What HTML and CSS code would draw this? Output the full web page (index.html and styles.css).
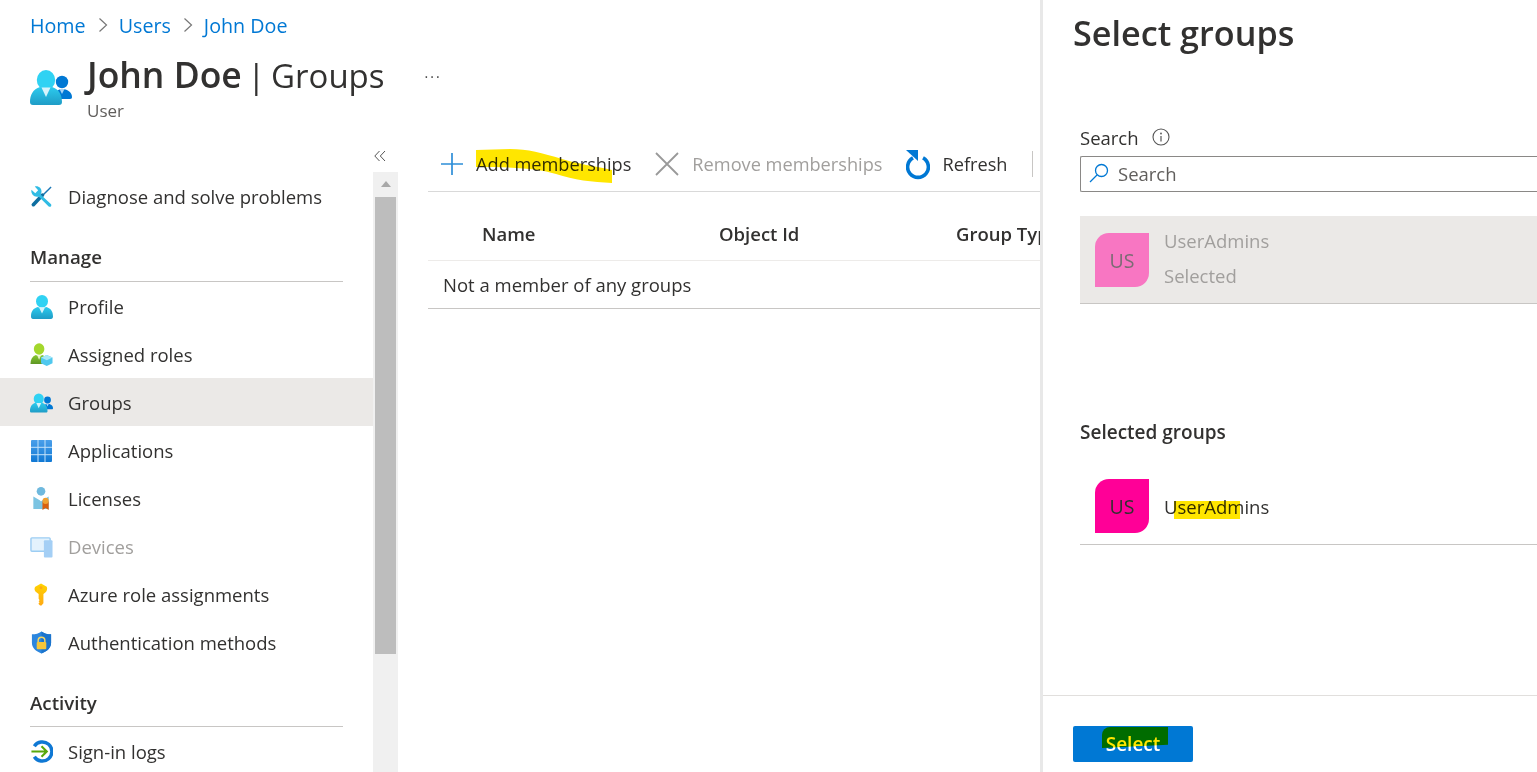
FILE: index.html
```html
<!DOCTYPE html>
<html lang="en">
<head>
<meta charset="utf-8">
<title>John Doe | Groups</title>
<link rel="stylesheet" href="styles.css">
</head>
<body>
<svg class="defs" aria-hidden="true">
  <defs>
    <linearGradient id="gBlue" x1="0" y1="0" x2="0" y2="1"><stop offset="0" stop-color="#2ccbee"/><stop offset="1" stop-color="#1f9cc6"/></linearGradient>
    <linearGradient id="gGreen" x1="0" y1="0" x2="0" y2="1"><stop offset="0" stop-color="#86c832"/><stop offset="1" stop-color="#5e9624"/></linearGradient>
    <linearGradient id="gKey" x1="0" y1="0" x2="0" y2="1"><stop offset="0" stop-color="#ffd400"/><stop offset="1" stop-color="#ffa914"/></linearGradient>
    <linearGradient id="gApps" x1="0" y1="0" x2="0" y2="1"><stop offset="0" stop-color="#4a9fea"/><stop offset="1" stop-color="#0f78d4"/></linearGradient>
    <symbol id="groups" viewBox="0 0 42 35">
      <circle cx="32" cy="12" r="6.200" fill="#0078d4"/>
      <path d="M25 29c0-6 2-10 7-10s10 3 10 8c0 1-.5 2-2 2z" fill="#0078d4"/>
      <path d="M29.500 19l2.500 5 2.500-5z" fill="#a9d4f5"/>
      <ellipse cx="16" cy="10" rx="9.200" ry="10" fill="#30d2f3"/>
      <path d="M0 32c0-7 3-13 10-15l6 2 6-2c7 2 10 8 10 15 0 2-1 3-3 3H3c-2 0-3-1-3-3z" fill="url(#gBlue)"/>
      <path d="M11.500 17.500h9L16 27z" fill="#d7f3fb"/>
    </symbol>
    <symbol id="person" viewBox="0 0 22 24">
      <ellipse cx="11" cy="6.300" rx="6" ry="6.300" fill="#30d2f3"/>
      <path d="M0 21.500c0-5 2-8 6.500-9.500l4.500 1.500 4.500-1.500c4.500 1.500 6.500 4.500 6.500 9.500 0 1.500-.7 2.500-2 2.500H2c-1.300 0-2-1-2-2.500z" fill="url(#gBlue)"/>
      <path d="M8 12.500h6l-3 6z" fill="#d7f3fb"/>
    </symbol>
  </defs>
</svg>

<div class="app">
  <div class="workspace">
    <header class="page-head">
      <nav class="crumbs">
        <a class="crumb">Home</a>
        <svg class="chev" viewBox="0 0 10 16"><path d="M1.500 1.500 8.500 8l-7 6.500" fill="none" stroke="#777" stroke-width="1.200"/></svg>
        <a class="crumb">Users</a>
        <svg class="chev" viewBox="0 0 10 16"><path d="M1.500 1.500 8.500 8l-7 6.500" fill="none" stroke="#777" stroke-width="1.200"/></svg>
        <a class="crumb">John Doe</a>
      </nav>
      <div class="title-row">
        <svg class="title-icon"><use href="#groups"/></svg>
        <div class="title-text">
          <h1 class="title"><span class="title-strong">John Doe</span> | Groups</h1>
          <div class="subtitle">User</div>
        </div>
        <span class="more">···</span>
      </div>
    </header>

    <div class="content">
      <aside class="side">
        <div class="collapse">
          <svg class="collapse-icon" viewBox="0 0 12 12"><path d="M5.500 1 .8 6l4.700 5M11 1 6.300 6 11 11" fill="none" stroke="#555" stroke-width="1"/></svg>
        </div>
        <div class="side-body">
          <nav class="menu">
            <a class="item">
              <svg class="ico" viewBox="0 0 24 24"><path d="M22 2 12 12" stroke="#1a76b5" stroke-width="1.500" fill="none"/><path d="M13 10.500 3.500 20.500" stroke="#0f6ea0" stroke-width="3.800" stroke-linecap="round" fill="none"/><path d="M1.500 5 5.500 8.500 8.500 5.500 5 1.500C8.500.5 12.500 3 12 7.500L11 10 22 20c1 2-1 3.500-2.500 2.500L9 12C5 13.500.5 9.500 1.500 5z" fill="#30bce4"/></svg>
              <span>Diagnose and solve problems</span>
            </a>
            <h2 class="section">Manage</h2>
            <a class="item"><svg class="ico ico-person"><use href="#person"/></svg><span>Profile</span></a>
            <a class="item">
              <svg class="ico" viewBox="0 0 24 24"><ellipse cx="9.500" cy="6.300" rx="5.500" ry="6" fill="#a3d72c"/><path d="M.5 22c0-5 2-8 5.500-9.500l3.500 1.500 3.500-1.500c3.500 1.500 5.500 4.500 5.500 9.500z" fill="url(#gGreen)"/><path d="M7.500 13h4l-2 4.500z" fill="#e6f5c8"/><path d="M17.500 12.500l6 2.700v5.800l-6 3-6-3v-5.800z" fill="#50c8ee"/><path d="M17.500 18l6-2.800-6-2.700-6 2.700z" fill="#a8e8f8"/></svg>
              <span>Assigned roles</span>
            </a>
            <a class="item item-active"><svg class="ico ico-groups"><use href="#groups"/></svg><span>Groups</span></a>
            <a class="item">
              <svg class="ico ico-apps" viewBox="0 0 21 22"><rect width="21" height="22" rx="1" fill="url(#gApps)"/><path d="M7 0v22M14 0v22M0 7.300h21M0 14.700h21" stroke="#c4e2f9" stroke-width="1"/></svg>
              <span>Applications</span>
            </a>
            <a class="item">
              <svg class="ico" viewBox="0 0 24 24"><circle cx="11.500" cy="4.500" r="4.500" fill="#6fb9de"/><path d="M3.500 10 11.500 14.500 19.500 10v13h-16z" fill="#7cc4e2"/><path d="M8.500 10.500h6l-3 4.500z" fill="#fff"/><path d="M13 15h6.500v9l-3.200-2-3.300 2z" fill="#d95f0e"/><circle cx="16.300" cy="14.500" r="3.200" fill="#f0a030"/></svg>
              <span>Licenses</span>
            </a>
            <a class="item item-muted">
              <svg class="ico" viewBox="0 0 24 24"><rect x="1" y="3" width="20" height="14" rx="1" fill="#e3f2fd" stroke="#9ccdf3" stroke-width="1.500"/><rect x="14.500" y="5.500" width="9" height="18" rx="1" fill="#a4cff5"/></svg>
              <span>Devices</span>
            </a>
            <a class="item">
              <svg class="ico" viewBox="0 0 24 24"><path d="M11.500.5 17.500 4c1 2 0 5-1.500 6l-2 1.500V21l-2 2.500h-1.500L9 22v-1l1-1-1-1 1-1-1-1.500v-5L7 10C5 9 4 6 5.500 4z" fill="url(#gKey)"/><circle cx="11.500" cy="5" r="1.500" fill="#ffa914"/></svg>
              <span>Azure role assignments</span>
            </a>
            <a class="item">
              <svg class="ico" viewBox="0 0 24 24"><path d="M12 .5c3 2 6 3 10 3v9c0 5-4 8.500-10 11-6-2.500-10-6-10-11v-9c4 0 7-1 10-3z" fill="#2c86de"/><path d="M12 .5c3 2 6 3 10 3v9c0 5-4 8.500-10 11z" fill="#1b74cc"/><path d="M8.500 12V10c0-2.200 1.500-3.500 3.500-3.500s3.500 1.300 3.500 3.500v2" fill="none" stroke="#f5d765" stroke-width="1.500"/><rect x="7" y="11.500" width="10" height="7.500" rx="1" fill="#f5c63a"/></svg>
              <span>Authentication methods</span>
            </a>
            <h2 class="section section-tight">Activity</h2>
            <a class="item">
              <svg class="ico" viewBox="0 0 24 24"><path d="M4.500 6.500A10 10 0 1 1 4.500 17.500" fill="none" stroke="#0f78d4" stroke-width="3.600"/><path d="M1.500 12H17M12 6.500l5.500 5.500-5.500 5.500" fill="none" stroke="#58a80c" stroke-width="2.200"/></svg>
              <span>Sign-in logs</span>
            </a>
          </nav>
          <div class="scrollbar">
            <div class="scroll-up"></div>
            <div class="scroll-thumb"></div>
          </div>
        </div>
      </aside>

      <main class="main">
        <div class="toolbar">
          <button class="tool tool-add">
            <svg class="tool-ico tool-ico-plus" viewBox="0 0 22 22"><path d="M11 0v22M0 11h22" stroke="#2e8ed8" stroke-width="1.700" fill="none"/></svg>
            <span>Add memberships</span>
          </button>
          <button class="tool tool-remove tool-muted">
            <svg class="tool-ico" viewBox="0 0 24 24"><path d="M1 1l22 22M23 1 1 23" stroke="#999" stroke-width="1.800" fill="none"/></svg>
            <span>Remove memberships</span>
          </button>
          <button class="tool tool-refresh">
            <svg class="tool-ico tool-ico-refresh" viewBox="0 0 24 30"><path d="M7 7.900A10.400 10.400 0 1 0 17 7.900" fill="none" stroke="#0078d4" stroke-width="3.600"/><path d="M0 0h12v11z" fill="#0078d4"/></svg>
            <span>Refresh</span>
          </button>
          <span class="tool-sep"></span>
        </div>
        <div class="table">
          <div class="thead">
            <span class="th">Name</span>
            <span class="th">Object Id</span>
            <span class="th">Group Type</span>
          </div>
          <div class="empty">Not a member of any groups</div>
        </div>
      </main>
    </div>
  </div>

  <section class="panel">
    <h2 class="panel-title">Select groups</h2>
    <div class="panel-body">
      <div class="label-row">
        <span>Search</span>
        <svg class="info" viewBox="0 0 18 18"><circle cx="9" cy="9" r="8" fill="none" stroke="#555" stroke-width="1.100"/><circle cx="9" cy="5.500" r=".9" fill="#555"/><path d="M9 8v5.500" stroke="#555" stroke-width="1.200"/></svg>
      </div>
      <div class="search">
        <svg class="search-ico" viewBox="0 0 20 20"><circle cx="12.500" cy="7.500" r="6" fill="none" stroke="#0078d4" stroke-width="1.300"/><path d="M8 12 1 19" stroke="#0078d4" stroke-width="1.300"/></svg>
        <span>Search</span>
      </div>
      <div class="result">
        <div class="avatar avatar-dim">US</div>
        <div class="result-text">
          <div>UserAdmins</div>
          <div>Selected</div>
        </div>
      </div>
      <h3 class="selected-head">Selected groups</h3>
      <div class="selected">
        <div class="avatar">US</div>
        <div class="selected-name">UserAdmins</div>
      </div>
    </div>
    <footer class="panel-foot">
      <button class="btn">Select</button>
    </footer>
  </section>

  <svg class="ink ink-add" viewBox="0 0 136 34"><path d="M0 1 34 0C52 0 66 4 86 10c16 5 32 7 50 11v13c-20-1-38-3-56-9C62 20 44 18 0 18z" fill="#ffe600"/></svg>
  <div class="ink ink-name"></div>
  <div class="ink ink-select"></div>
</div>
</body>
</html>
```
FILE: styles.css
```css
* { box-sizing: border-box; }
html, body { margin: 0; height: 100%; background: #fff; overflow: hidden; }
body { font-family: "Open Sans", "Liberation Sans", sans-serif; font-size: 18.500px; color: #323130; }
.defs { position: absolute; width: 0; height: 0; }
.app { display: flex; width: 1537px; height: 772px; position: relative; overflow: hidden; }
.workspace { width: 1043px; flex: none; display: flex; flex-direction: column; overflow: hidden; }

.page-head { height: 140px; flex: none; padding: 12px 0 0 30px; }
.crumbs { display: flex; align-items: center; height: 26px; color: #0078d4; }
.crumb { font-size: 19.700px; }
.chev { width: 10px; height: 16px; margin: 0 11px 0 12px; }
.title-row { display: flex; align-items: flex-start; margin-top: 13px; }
.title-icon { width: 42px; height: 35px; margin-top: 19px; flex: none; }
.title-text { margin-left: 15px; }
.title { margin: 0; font-size: 33px; font-weight: 400; line-height: 46px; white-space: nowrap; word-spacing: -3px; }
.title-strong { font-size: 35.500px; font-weight: 600; word-spacing: 0; }
.subtitle { font-size: 17px; line-height: 24px; color: #605e5c; }
.more { margin: 11px 0 0 40px; font-size: 14px; line-height: 30px; letter-spacing: 2px; color: #444; }

.content { display: flex; flex: 1; min-height: 0; }
.side { width: 398px; flex: none; display: flex; flex-direction: column; }
.collapse { height: 32px; flex: none; display: flex; justify-content: flex-end; padding: 10px 12px 0 0; }
.collapse-icon { width: 12px; height: 12px; }
.side-body { display: flex; flex: 1; min-height: 0; }
.menu { width: 373px; flex: none; }
.item { display: flex; align-items: center; height: 48px; padding: 1px 0 0 30px; }
.item-active { background: #ebe9e7; }
.item-muted { color: #a19f9d; }
.ico { width: 23px; height: 23px; margin-right: 15px; flex: none; }
.ico-person { width: 22px; height: 24px; margin-left: 1px; }
.ico-groups { width: 23px; height: 20px; }
.ico-apps { width: 21px; height: 22px; margin-left: 1px; margin-right: 16px; }
.section { margin: 25px 30px 0; padding-bottom: 12px; border-bottom: 1px solid #c8c6c4; font-size: 18.700px; font-weight: 600; line-height: 24px; }
.section-tight { padding-bottom: 11px; }
.scrollbar { width: 25px; flex: none; background: #f0f0f0; padding: 0 2px; }
.scroll-up { height: 25px; }
.scroll-up::before { content: ""; display: block; width: 0; height: 0; margin: 0 auto; transform: translateY(9px); border: 5.500px solid transparent; border-top: 0; border-bottom: 6px solid #a8a8a8; }
.scroll-thumb { height: 457px; background: #bdbdbd; }

.main { flex: 1; min-width: 0; padding-left: 30px; }
.toolbar { display: flex; align-items: center; height: 52px; padding-bottom: 4px; border-bottom: 1px solid #d9d9d9; font-size: 18.200px; }
.tool { display: flex; align-items: center; padding: 0; border: 0; background: none; color: inherit; font: inherit; white-space: nowrap; }
.tool-muted { color: #a19f9d; }
.tool-ico { width: 24px; height: 24px; flex: none; margin-right: 13px; }
.tool-ico-plus { width: 22px; height: 22px; }
.tool-ico-refresh { height: 30px; margin: 3px 12px 0 0; }
.tool-add { margin-left: 13px; margin-right: 24px; }
.tool-remove { margin-right: 24px; }
.tool-sep { width: 1px; height: 26px; background: #c8c6c4; margin-left: 24px; }

.table { width: 620px; }
.thead { display: flex; align-items: center; height: 69px; padding: 14px 0 0 54px; border-bottom: 1px solid #edebe9; white-space: nowrap; }
.th { width: 237px; flex: none; font-weight: 600; }
.empty { height: 48px; padding-left: 15px; display: flex; align-items: center; border-bottom: 1px solid #c8c6c4; }

.panel { width: 494px; flex: none; display: flex; flex-direction: column; background: #fff; box-shadow: -3px 0 0 #e8e8e8; position: relative; }
.panel-title { margin: 0; padding: 10px 0 0 30px; height: 126px; flex: none; font-size: 34.200px; line-height: 46px; font-weight: 600; white-space: nowrap; }
.panel-body { flex: 1; padding-left: 37px; min-height: 0; }
.label-row { display: flex; align-items: center; height: 24px; padding-bottom: 2px; }
.info { width: 18px; height: 18px; margin-left: 13px; }
.search { display: flex; align-items: center; height: 36px; margin-top: 6px; padding: 0 0 2px 8px; border: 1px solid #8a8886; border-right: 0; border-radius: 2px 0 0 2px; color: #605e5c; }
.search-ico { width: 20px; height: 20px; margin-right: 9px; }
.result { display: flex; align-items: flex-start; height: 88px; margin-top: 24px; padding: 17px 0 0 15px; background: #ebe9e7; border-bottom: 1px solid #c8c6c4; }
.result-text { color: #a19f9d; line-height: 35px; margin: -10px 0 0 15px; }
.avatar { width: 54px; height: 54px; flex: none; display: flex; align-items: center; justify-content: center; padding-top: 1px; background: #ff0097; color: #323130; border-radius: 14px 0 14px 0; font-size: 19.500px; }
.avatar-dim { background: #f876c2; color: #7a6c74; }
.selected-head { margin: 115px 0 0; font-size: 19px; font-weight: 600; line-height: 26px; }
.selected { display: flex; align-items: center; gap: 15px; height: 78px; margin-top: 22px; padding-left: 15px; border-bottom: 1px solid #c8c6c4; }
.selected-name { padding-top: 2px; }
.panel-foot { height: 77px; flex: none; padding: 30px 0 0 30px; border-top: 1px solid #e1dfdd; }
.btn { display: block; width: 120px; height: 36px; padding: 0; border: 0; border-radius: 2px; background: #0078d4; color: #fff; font: 600 19px "Open Sans", "Liberation Sans", sans-serif; }

.ink { position: absolute; mix-blend-mode: multiply; }
.ink-add { left: 476px; top: 149px; width: 136px; height: 34px; }
.ink-name { left: 1174px; top: 501px; width: 66px; height: 18px; background: #ffe600; }
.ink-select { left: 1102px; top: 727px; width: 66px; height: 21px; background: #ffe600; border-radius: 8px 0 0 0; clip-path: polygon(0 0, 100% 0, 100% 85%, 0 100%); }
```
